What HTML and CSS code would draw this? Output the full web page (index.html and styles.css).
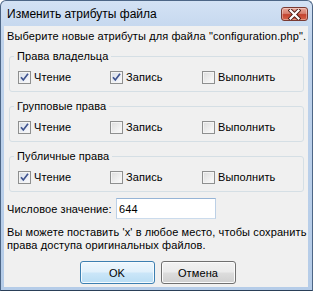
FILE: index.html
```html
<!DOCTYPE html>
<html lang="ru">
<head>
    <meta charset="UTF-8">
    <meta name="viewport" content="width=device-width, initial-scale=1.0">
    <title>Изменить атрибуты файла</title>
    <link rel="stylesheet" href="styles.css">
</head>
<body>
    <div class="window">
        <div class="titlebar">
            <span class="title">Изменить атрибуты файла</span>
            <span class="close-btn">
                <svg width="13" height="11" viewBox="0 0 13 11">
                    <path d="M2.5 1.5 L10.5 9.5 M10.5 1.5 L2.5 9.5" stroke="#4a1b16" stroke-width="4" stroke-linecap="square"/>
                    <path d="M2.5 1.5 L10.5 9.5 M10.5 1.5 L2.5 9.5" stroke="#fff" stroke-width="2.2" stroke-linecap="square"/>
                </svg>
            </span>
        </div>
        <div class="client">
            <p class="intro">Выберите новые атрибуты для файла "configuration.php".</p>

            <fieldset class="group">
                <legend>Права владельца</legend>
                <div class="perm-row">
                    <label class="check"><span class="box checked"><svg width="11" height="11" viewBox="0 0 11 11"><path d="M2 5.2 L4.3 8 L9 1.8" fill="none" stroke="#3e538f" stroke-width="1.7"/></svg></span>Чтение</label>
                    <label class="check"><span class="box checked"><svg width="11" height="11" viewBox="0 0 11 11"><path d="M2 5.2 L4.3 8 L9 1.8" fill="none" stroke="#3e538f" stroke-width="1.7"/></svg></span>Запись</label>
                    <label class="check"><span class="box"></span>Выполнить</label>
                </div>
            </fieldset>

            <fieldset class="group">
                <legend>Групповые права</legend>
                <div class="perm-row">
                    <label class="check"><span class="box checked"><svg width="11" height="11" viewBox="0 0 11 11"><path d="M2 5.2 L4.3 8 L9 1.8" fill="none" stroke="#3e538f" stroke-width="1.7"/></svg></span>Чтение</label>
                    <label class="check"><span class="box"></span>Запись</label>
                    <label class="check"><span class="box"></span>Выполнить</label>
                </div>
            </fieldset>

            <fieldset class="group">
                <legend>Публичные права</legend>
                <div class="perm-row">
                    <label class="check"><span class="box checked"><svg width="11" height="11" viewBox="0 0 11 11"><path d="M2 5.2 L4.3 8 L9 1.8" fill="none" stroke="#3e538f" stroke-width="1.7"/></svg></span>Чтение</label>
                    <label class="check"><span class="box"></span>Запись</label>
                    <label class="check"><span class="box"></span>Выполнить</label>
                </div>
            </fieldset>

            <div class="numeric-row">
                <label for="numeric">Числовое значение:</label>
                <input type="text" id="numeric" value="644">
            </div>

            <p class="note">Вы можете поставить 'x' в любое место, чтобы сохранить<br>права доступа оригинальных файлов.</p>

            <div class="buttons">
                <button class="btn default">OK</button>
                <button class="btn">Отмена</button>
            </div>
        </div>
    </div>
</body>
</html>
```

FILE: styles.css
```css
body {
    margin: 0;
    padding: 0;
    width: 313px;
    height: 291px;
    overflow: hidden;
    font-family: "Liberation Sans", Arial, sans-serif;
    font-size: 11px;
    letter-spacing: 0.1px;
    color: #000;
}
.window {
    box-sizing: border-box;
    width: 313px;
    height: 291px;
    display: flex;
    flex-direction: column;
    border: 1px solid #4d6686;
    border-bottom-color: #2a3f58;
    border-radius: 6px 6px 0 0;
    background: linear-gradient(#d3e2f4, #bfd3ec 40px, #b5cce8);
    padding: 0 4px 3px 3px;
}
.titlebar {
    height: 25px;
    flex: none;
    display: flex;
    align-items: center;
    justify-content: space-between;
    padding: 0 0 0 3px;
}
.title {
    font-size: 12px;
    letter-spacing: 0;
    color: #000;
}
.close-btn {
    width: 27px;
    height: 14px;
    margin-top: 1px;
    box-sizing: border-box;
    border: 1px solid #7a3a32;
    border-radius: 3px;
    background: linear-gradient(#eba89a, #d7806f 45%, #c4432f 55%, #d6644a);
    box-shadow: inset 0 0 0 1px rgba(255, 255, 255, 0.35);
    display: flex;
    align-items: center;
    justify-content: center;
}
.client {
    flex: 1;
    min-width: 0;
    background-color: #f0f0f0;
    padding: 3px 4px 0 3px;
}
.intro {
    margin: 0;
    line-height: 14px;
    white-space: nowrap;
}
.group {
    margin: 6px 0 0 2px;
    padding: 7px 0 7px 8px;
    border: 1px solid #d5dfe5;
    border-radius: 3px;
    min-width: 0;
}
.group + .group {
    margin-top: 7px;
}
.group legend {
    line-height: 14px;
    padding: 0 3px;
    margin-left: -4px;
}
.perm-row {
    display: grid;
    grid-template-columns: 92px 92px 92px;
    height: 14px;
    align-items: center;
}
.check {
    display: flex;
    align-items: center;
    gap: 3px;
    line-height: 14px;
}
.box {
    box-sizing: border-box;
    width: 13px;
    height: 13px;
    border: 1px solid #8e8f8f;
    background: linear-gradient(135deg, #dcdcdc, #f6f6f6 80%);
    box-shadow: inset 0 0 0 1px #f4f4f4;
    display: flex;
    align-items: center;
    justify-content: center;
}
.box.checked {
    background: linear-gradient(135deg, #d4dbe6, #f4f6fa 80%);
}
.numeric-row {
    margin-top: 6px;
    display: flex;
    align-items: center;
    height: 21px;
}
.numeric-row label {
    width: 109px;
}
.numeric-row input {
    box-sizing: border-box;
    width: 100px;
    height: 21px;
    margin: 0;
    padding: 0 2px;
    font-family: inherit;
    font-size: 11px;
    letter-spacing: 0.1px;
    border: 1px solid;
    border-color: #96b4d6 #bcd0e6 #cbdbec #bcd0e6;
    background-color: #fff;
    outline: none;
}
.note {
    margin: 7px 0 0;
    line-height: 13px;
    white-space: nowrap;
}
.buttons {
    margin-top: 9px;
    display: flex;
    justify-content: center;
    gap: 6px;
    padding-left: 4px;
}
.btn {
    box-sizing: border-box;
    width: 75px;
    height: 23px;
    font-family: inherit;
    font-size: 11px;
    letter-spacing: 0.1px;
    color: #000;
    border: 1px solid #707070;
    border-radius: 3px;
    background: linear-gradient(#f2f2f2, #ebebeb 48%, #dddddd 52%, #cfcfcf);
    box-shadow: inset 0 0 0 1px #fbfbfb;
    padding: 0;
}
.btn.default {
    border-color: #3c7fb1;
    background: linear-gradient(#eef7fd, #e0f0fb 48%, #cbe6f8 52%, #b9ddf4);
    box-shadow: inset 0 0 0 1px #f6fbfe;
}
```
